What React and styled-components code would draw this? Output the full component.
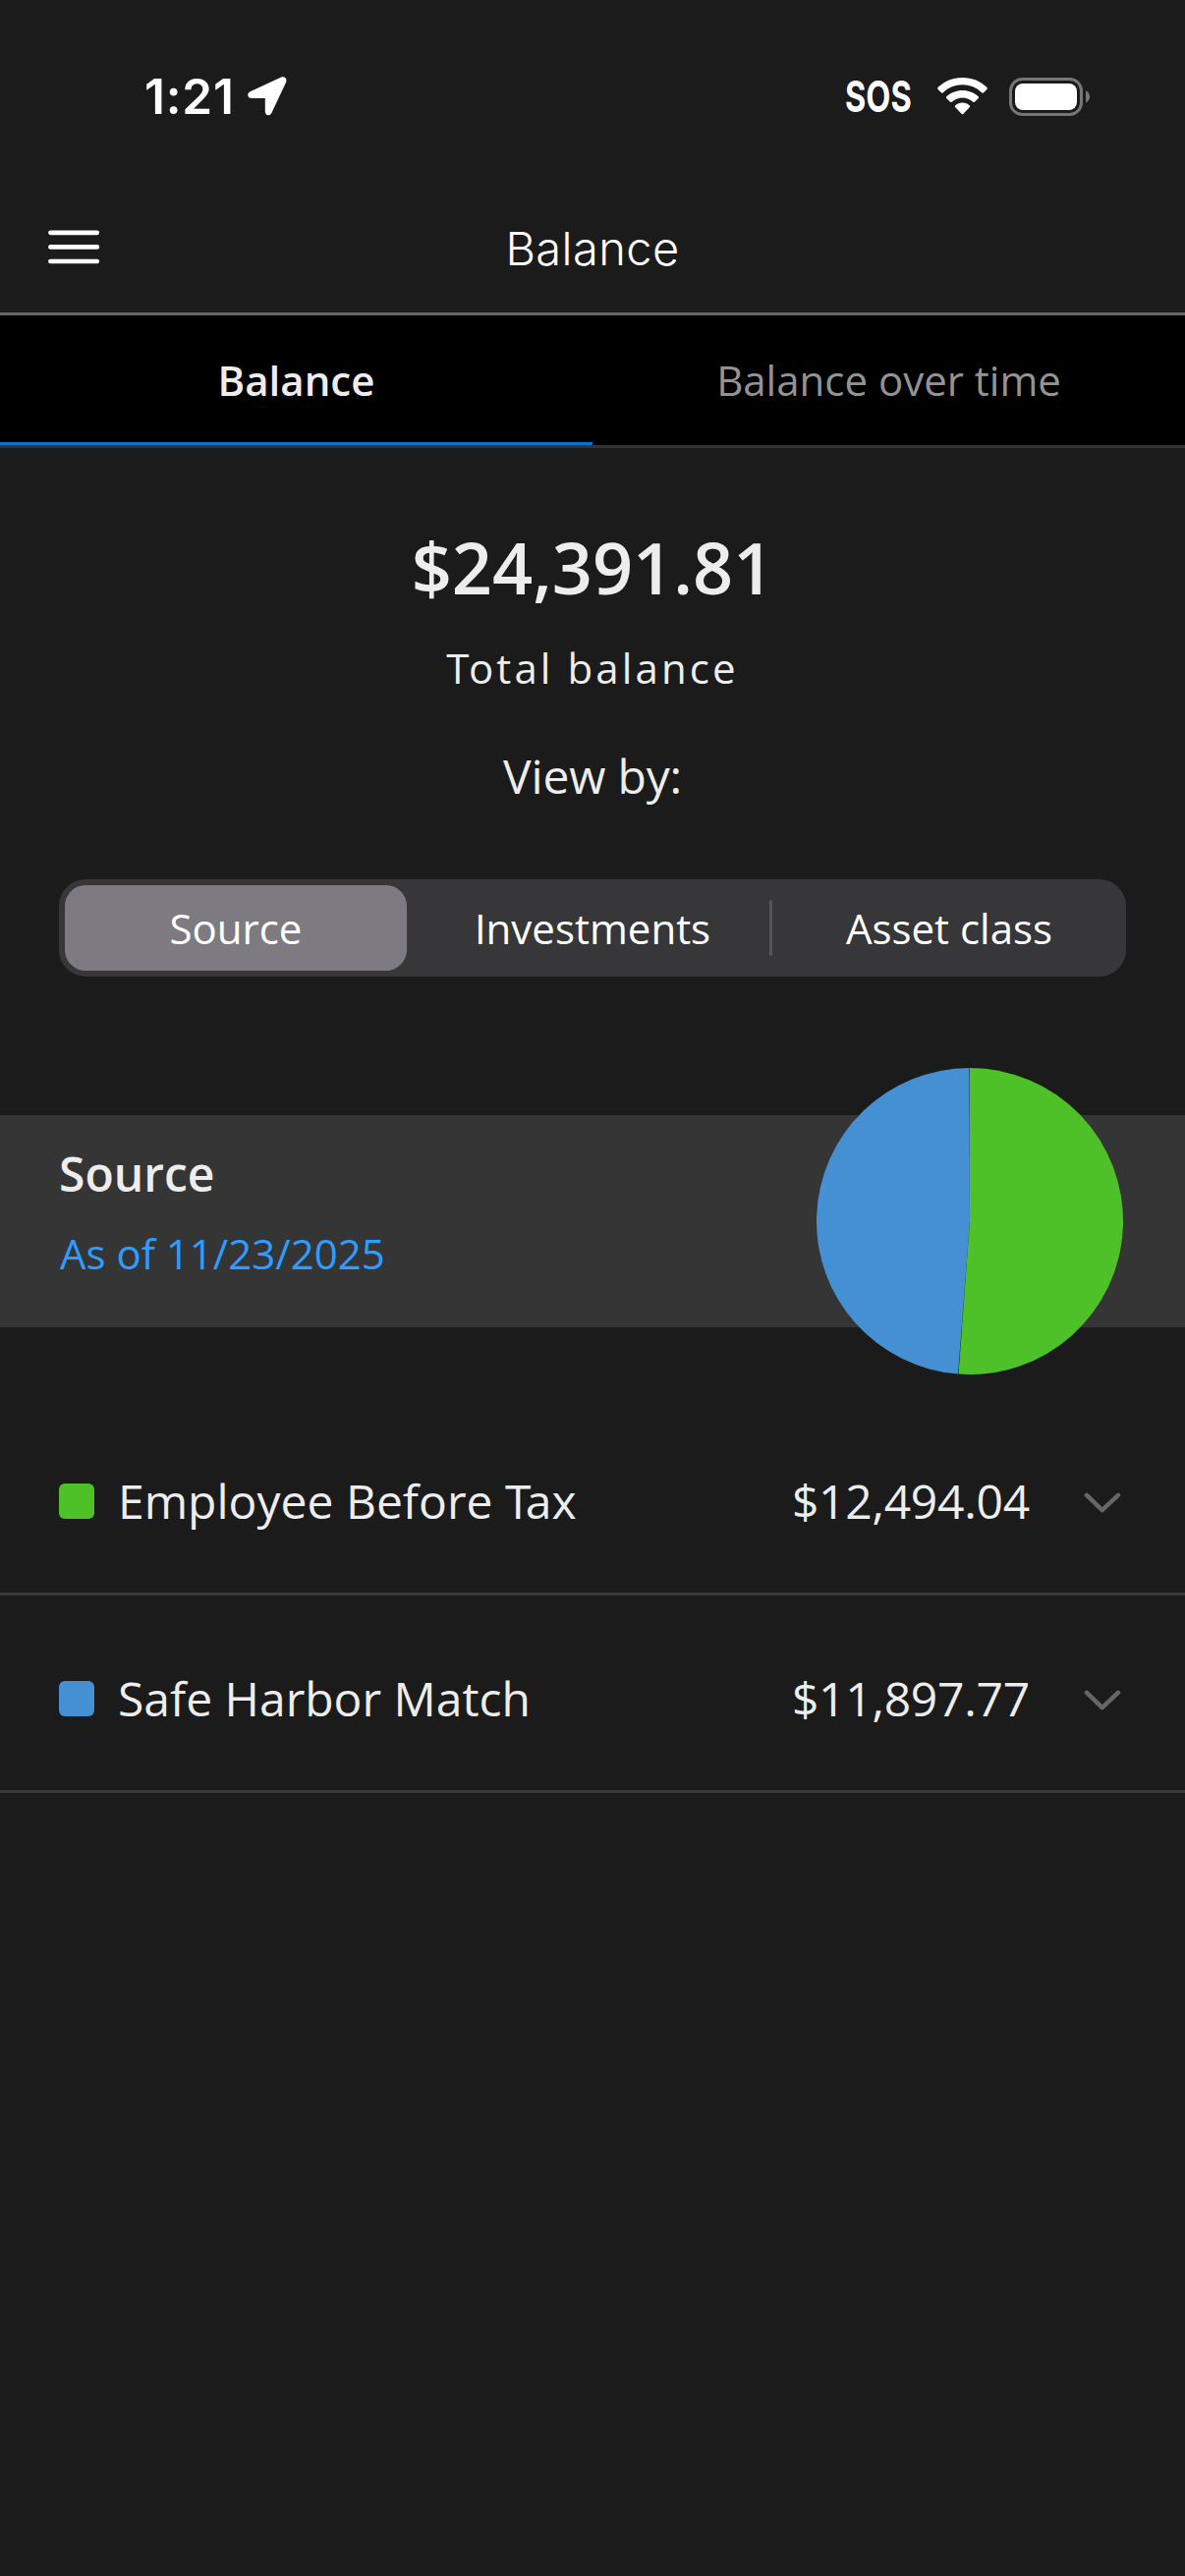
import React from "react";
import styled, { createGlobalStyle } from "styled-components";

const GlobalStyle = createGlobalStyle`
  *, *::before, *::after { box-sizing: border-box; }
  html, body { margin: 0; padding: 0; background: #1b1b1b; }
  button { margin: 0; padding: 0; border: 0; background: none; color: inherit; font: inherit; }
`;

const Screen = styled.main`
  display: flex;
  flex-direction: column;
  width: 1206px;
  height: 2622px;
  overflow: hidden;
  background: #1b1b1b;
  color: #ededed;
  font-family: "Open Sans", "Noto Sans", sans-serif;
`;

const StatusBar = styled.div`
  display: flex;
  justify-content: space-between;
  align-items: center;
  height: 196px;
  padding: 0 97px 0 147px;
  color: #fff;
  font-family: Inter, sans-serif;
`;

const StatusGroup = styled.div`
  display: flex;
  align-items: center;
`;

const Clock = styled.span`
  width: 105px;
  font-size: 49.5px;
  font-weight: 600;
  line-height: 60px;
  letter-spacing: 0.8px;
  white-space: nowrap;
`;

const Sos = styled.span`
  width: 66px;
  margin-right: 28px;
  font-size: 44px;
  font-weight: 700;
  line-height: 60px;
  white-space: nowrap;
  transform: scaleX(0.74);
  transform-origin: left center;
`;

const WifiSlot = styled.span`
  display: flex;
  margin-right: 22px;
`;

const Header = styled.header`
  display: grid;
  grid-template-columns: 200px 1fr 200px;
  align-items: center;
  height: 125px;
  border-bottom: 3px solid #666;
`;

const MenuButton = styled.button`
  display: flex;
  justify-self: start;
  margin: -12px 0 0 49px;
`;

const Title = styled.h1`
  margin: 0 0 8px;
  color: #fff;
  font-family: Inter, sans-serif;
  font-size: 47px;
  font-weight: 300;
  line-height: 60px;
  letter-spacing: 0.4px;
  text-align: center;
`;

const Tabs = styled.nav`
  display: flex;
  height: 135px;
  background: #000;
  border-bottom: 3px solid #333;
`;

const Tab = styled.button`
  flex: 1;
  padding-top: 2px;
  border-bottom: 3px solid ${(p) => (p.$active ? "#0073d1" : "transparent")};
  color: ${(p) => (p.$active ? "#ededed" : "#939393")};
  font-size: 42px;
  font-weight: ${(p) => (p.$active ? 600 : 400)};
  line-height: 60px;
`;

const Summary = styled.section`
  display: flex;
  flex-direction: column;
  align-items: center;
  height: 439px;
  padding-top: 71px;
`;

const Total = styled.div`
  font-size: 72px;
  font-weight: 600;
  line-height: 100px;
`;

const TotalLabel = styled.div`
  margin-top: 23px;
  font-size: 42px;
  line-height: 60px;
  letter-spacing: 3.1px;
`;

const ViewBy = styled.div`
  margin-top: 50px;
  font-size: 48px;
  line-height: 60px;
  letter-spacing: -0.2px;
`;

const Segments = styled.div`
  display: grid;
  grid-template-columns: 360px 1fr 3px 360px;
  align-items: center;
  height: 99px;
  margin: 0 60px;
  padding: 6px 0;
  border-radius: 27px;
  background: #373739;
`;

const Segment = styled.button`
  height: 87px;
  margin: 0 ${(p) => (p.$active ? "6px" : "0")};
  padding-left: ${(p) => (p.$middle ? "3px" : "0")};
  border-radius: 21px;
  background: ${(p) => (p.$active ? "#7d7b81" : "transparent")};
  color: #fff;
  font-size: 42px;
  line-height: 60px;
`;

const SegmentDivider = styled.span`
  height: 57px;
  border-radius: 2px;
  background: #555557;
`;

const Band = styled.section`
  display: flex;
  align-items: center;
  justify-content: space-between;
  height: 216px;
  margin-top: 141px;
  padding: 0 63px 0 60px;
  background: #353535;
`;

const BandText = styled.div`
  display: flex;
  flex-direction: column;
  gap: 21px;
  padding-bottom: 15px;
`;

const BandTitle = styled.h2`
  margin: 0;
  font-size: 48px;
  font-weight: 600;
  line-height: 60px;
`;

const AsOf = styled.div`
  padding-left: 1px;
  color: #2f9dff;
  font-size: 42px;
  line-height: 60px;
`;

const Pie = styled.svg`
  flex: none;
  width: 312px;
  height: 312px;
`;

const Rows = styled.ul`
  margin: 72px 0 0;
  padding: 0;
  list-style: none;
`;

const Row = styled.li`
  display: flex;
  align-items: center;
  height: 201px;
  padding: 12px 65px 0 60px;
  border-bottom: 3px solid #383838;
  font-size: 48px;
  line-height: 60px;
`;

const Swatch = styled.span`
  width: 36px;
  height: 36px;
  margin-right: 24px;
  border-radius: 6px;
  background: ${(p) => p.$color};
`;

const Name = styled.span`
  flex: 1;
`;

const Amount = styled.span`
  margin-right: 54px;
  letter-spacing: -0.25px;
`;

const Tight = styled.span`
  letter-spacing: ${(p) => p.$by}px;
`;

// Tucks a capital T over the round lowercase letter that follows it.
function Kerned({ text, by }) {
  return text
    .split(/(T)(?=[ao])/)
    .map((part, i) => (part === "T" ? <Tight key={i} $by={by}>T</Tight> : part));
}

const sources = [
  { name: "Employee Before Tax", amount: "$12,494.04", value: 12494.04, color: "#4fc128" },
  { name: "Safe Harbor Match", amount: "$11,897.77", value: 11897.77, color: "#4590d3" },
];

const SLICE_GAP = 0.0005;

function PieChart({ items }) {
  const total = items.reduce((sum, i) => sum + i.value, 0);
  const point = (t) => {
    const a = t * Math.PI * 2;
    return `${156 + 156 * Math.sin(a)} ${156 - 156 * Math.cos(a)}`;
  };
  let start = 0;
  return (
    <Pie viewBox="0 0 312 312">
      {items.map((item) => {
        const share = item.value / total;
        const d = `M156 156L${point(start)}A156 156 0 ${share > 0.5 ? 1 : 0} 1 ${point(start + share - SLICE_GAP)}Z`;
        start += share;
        return <path key={item.name} d={d} fill={item.color} />;
      })}
    </Pie>
  );
}

const LocationArrow = () => (
  <svg width="40" height="40" viewBox="0 0 40 40" fill="#fff">
    <path d="M2.5 15.2L33.8.7C37.6-.9 40.6 2 39.1 5.8L24.4 36.9C22.7 40.5 17.8 39.8 17.8 35.6V22.1H4C-.4 22-.9 16.9 2.5 15.2Z" />
  </svg>
);

const Wifi = () => (
  <svg width="51" height="38" viewBox="0 0 51 38" fill="#fff">
    <path d="M25.5 0C35.200 0 44 3.700 50.300 9.800c.7.7.7 1.400.1 2.100l-3.300 3.300c-.6.6-1.400.6-2 0C39.900 10.300 33 7.300 25.500 7.300S11.100 10.300 5.900 15.200c-.6.6-1.400.6-2 0L.6 11.900c-.6-.7-.6-1.400.1-2.100C7 3.700 15.800 0 25.500 0Z" />
    <path d="M25.500 12.900c6.200 0 11.900 2.300 16 6.200.7.7.7 1.400.1 2.100l-3.400 3.400c-.6.6-1.300.6-2 .1-2.900-2.700-6.600-4.300-10.700-4.300s-7.800 1.600-10.700 4.300c-.7.500-1.400.5-2-.1l-3.400-3.400c-.6-.7-.6-1.400.1-2.100 4.100-3.900 9.800-6.200 16-6.200Z" />
    <path d="M25.500 25.600c2.700 0 5.200 1 7.100 2.600.8.700.8 1.400.1 2.100l-6.200 6.400c-.6.7-1.400.7-2 0l-6.200-6.400c-.7-.7-.7-1.400.1-2.100 1.900-1.600 4.400-2.600 7.100-2.600Z" />
  </svg>
);

const Battery = () => (
  <svg width="82" height="39" viewBox="0 0 82 39">
    <rect x="1.500" y="1.500" width="72" height="36" rx="12" fill="none" stroke="#767676" strokeWidth="3" />
    <rect x="6" y="6" width="63" height="27" rx="8" fill="#fff" />
    <path d="M78 13.200c5.400 2.700 5.400 10 0 12.600Z" fill="#767676" />
  </svg>
);

const MenuIcon = () => (
  <svg width="53" height="35" viewBox="0 0 53 35" stroke="#fff" strokeWidth="4.700" strokeLinecap="round">
    <path d="M2.400 2.800H49.800M2.400 17.400H49.800M2.400 32H49.800" />
  </svg>
);

const Chevron = () => (
  <svg width="39" height="24" viewBox="0 0 39 24" fill="none" stroke="#666" strokeWidth="4.500" strokeLinecap="round" strokeLinejoin="round">
    <path d="M4 5.900L19.700 21.200L35.900 5.900" />
  </svg>
);

export default function App() {
  return (
    <Screen>
      <GlobalStyle />
      <StatusBar>
        <StatusGroup>
          <Clock>1:21</Clock>
          <LocationArrow />
        </StatusGroup>
        <StatusGroup>
          <Sos>SOS</Sos>
          <WifiSlot>
            <Wifi />
          </WifiSlot>
          <Battery />
        </StatusGroup>
      </StatusBar>
      <Header>
        <MenuButton aria-label="Menu">
          <MenuIcon />
        </MenuButton>
        <Title>Balance</Title>
      </Header>
      <Tabs>
        <Tab $active>Balance</Tab>
        <Tab>Balance over time</Tab>
      </Tabs>
      <Summary>
        <Total>$24,391.81</Total>
        <TotalLabel>
          <Kerned text="Total balance" by={-0.5} />
        </TotalLabel>
        <ViewBy>View by:</ViewBy>
      </Summary>
      <Segments>
        <Segment $active>Source</Segment>
        <Segment $middle>Investments</Segment>
        <SegmentDivider />
        <Segment>Asset class</Segment>
      </Segments>
      <Band>
        <BandText>
          <BandTitle>Source</BandTitle>
          <AsOf>As of 11/23/2025</AsOf>
        </BandText>
        <PieChart items={sources} />
      </Band>
      <Rows>
        {sources.map((s) => (
          <Row key={s.name}>
            <Swatch $color={s.color} />
            <Name>
              <Kerned text={s.name} by={-5.5} />
            </Name>
            <Amount>{s.amount}</Amount>
            <Chevron />
          </Row>
        ))}
      </Rows>
    </Screen>
  );
}
